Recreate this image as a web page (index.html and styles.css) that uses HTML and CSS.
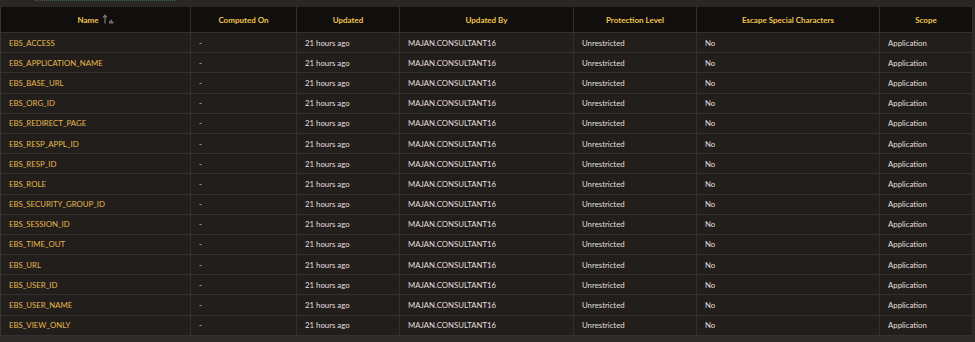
FILE: index.html
```html
<!DOCTYPE html>
<html lang="en">

<head>
    <meta charset="UTF-8">
    <meta name="viewport" content="width=device-width, initial-scale=1.0">
    <title>Application Items</title>
    <link rel="stylesheet" href="styles.css">
</head>

<body>
    <div class="toolbar">
        <div class="focus-line"></div>
    </div>
    <table class="grid">
        <colgroup>
            <col class="col-name">
            <col class="col-computed">
            <col class="col-updated">
            <col class="col-by">
            <col class="col-protect">
            <col class="col-escape">
            <col class="col-scope">
        </colgroup>
        <thead>
            <tr>
                <th>Name
                    <svg class="sort" width="12" height="10" viewBox="0 0 12 10">
                        <path d="M3 9.5V1.5M1 3.5L3 1.2L5 3.5" stroke="#8a8580" stroke-width="1.1" fill="none" />
                        <path d="M7 9.5V7H8.5V5.5H10V7.5H11.5V9.5Z" fill="#6e6a66" />
                    </svg>
                </th>
                <th>Computed On</th>
                <th>Updated</th>
                <th>Updated By</th>
                <th>Protection Level</th>
                <th>Escape Special Characters</th>
                <th>Scope</th>
            </tr>
        </thead>
        <tbody id="rows"></tbody>
    </table>
    <div class="footer"></div>

    <script>
        const names = [
            "EBS_ACCESS", "EBS_APPLICATION_NAME", "EBS_BASE_URL", "EBS_ORG_ID",
            "EBS_REDIRECT_PAGE", "EBS_RESP_APPL_ID", "EBS_RESP_ID", "EBS_ROLE",
            "EBS_SECURITY_GROUP_ID", "EBS_SESSION_ID", "EBS_TIME_OUT", "EBS_URL",
            "EBS_USER_ID", "EBS_USER_NAME", "EBS_VIEW_ONLY"
        ];
        const tbody = document.getElementById("rows");
        names.forEach((n) => {
            const tr = document.createElement("tr");
            tr.innerHTML =
                `<td class="name">${n}</td>` +
                `<td>-</td>` +
                `<td>21 hours ago</td>` +
                `<td>MAJAN.CONSULTANT16</td>` +
                `<td>Unrestricted</td>` +
                `<td>No</td>` +
                `<td>Application</td>`;
            tbody.appendChild(tr);
        });
    </script>
</body>

</html>
```

FILE: styles.css
```css
body {
    margin: 0;
    padding: 0;
    background-color: #2b2725;
    font-family: "Lato", "Liberation Sans", sans-serif;
    font-size: 7.8px;
    color: #e2dfdc;
    overflow: hidden;
}

.toolbar {
    height: 7px;
}

.focus-line {
    margin-left: 35px;
    width: 140px;
    height: 1px;
    border-top: 1px dotted #3f5f4c;
}

.grid {
    width: 972px;
    border-collapse: collapse;
    table-layout: fixed;
    background-color: #221e1c;
    border-left: 1px solid #3a3532;
}

.grid th {
    height: 25px;
    padding: 0 8px;
    background-color: #110f0e;
    color: #f2c24e;
    font-size: 8px;
    font-weight: bold;
    text-align: center;
    white-space: nowrap;
    border-right: 1px solid #34302d;
    border-bottom: 1px solid #34302d;
}

.grid td {
    height: 19.2px;
    padding: 0 8px;
    text-align: left;
    white-space: nowrap;
    border-right: 1px solid #34302d;
    border-bottom: 1px solid #34302d;
}

.grid td.name {
    color: #e8b84c;
}

.sort {
    vertical-align: -1px;
    margin-left: 1px;
}

.col-name { width: 190px; }
.col-computed { width: 106px; }
.col-updated { width: 103px; }
.col-by { width: 174px; }
.col-protect { width: 123px; }
.col-escape { width: 183px; }
.col-scope { width: 93px; }

.footer {
    height: 10px;
    background-color: #2e2a28;
}
```
